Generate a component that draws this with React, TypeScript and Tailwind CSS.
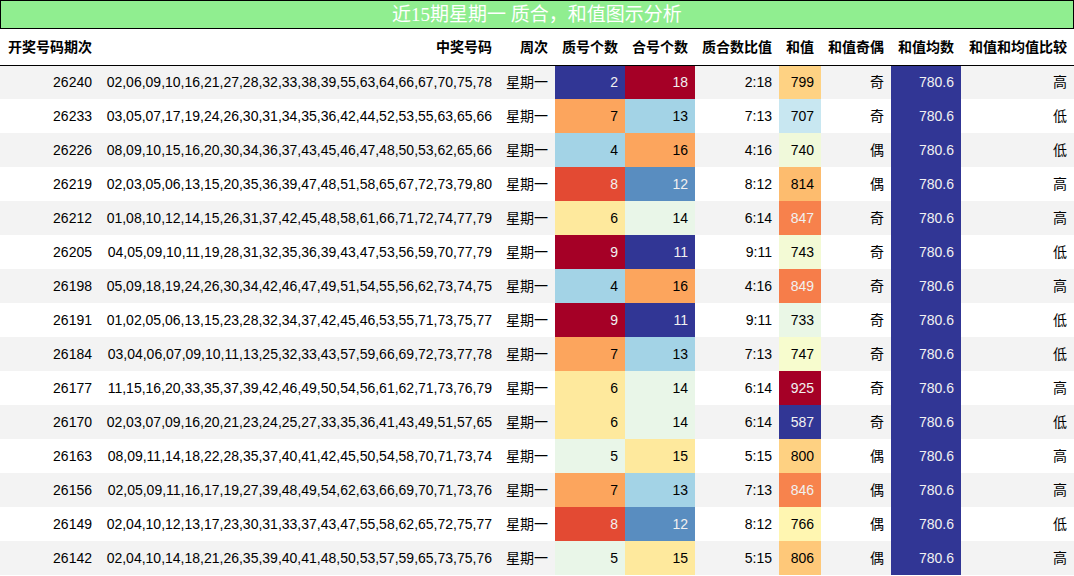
const rows: [string, string, number, number, number, string, string][] = [
  ["26240", "02,06,09,10,16,21,27,28,32,33,38,39,55,63,64,66,67,70,75,78", 2, 18, 799, "奇", "高"],
  ["26233", "03,05,07,17,19,24,26,30,31,34,35,36,42,44,52,53,55,63,65,66", 7, 13, 707, "奇", "低"],
  ["26226", "08,09,10,15,16,20,30,34,36,37,43,45,46,47,48,50,53,62,65,66", 4, 16, 740, "偶", "低"],
  ["26219", "02,03,05,06,13,15,20,35,36,39,47,48,51,58,65,67,72,73,79,80", 8, 12, 814, "偶", "高"],
  ["26212", "01,08,10,12,14,15,26,31,37,42,45,48,58,61,66,71,72,74,77,79", 6, 14, 847, "奇", "高"],
  ["26205", "04,05,09,10,11,19,28,31,32,35,36,39,43,47,53,56,59,70,77,79", 9, 11, 743, "奇", "低"],
  ["26198", "05,09,18,19,24,26,30,34,42,46,47,49,51,54,55,56,62,73,74,75", 4, 16, 849, "奇", "高"],
  ["26191", "01,02,05,06,13,15,23,28,32,34,37,42,45,46,53,55,71,73,75,77", 9, 11, 733, "奇", "低"],
  ["26184", "03,04,06,07,09,10,11,13,25,32,33,43,57,59,66,69,72,73,77,78", 7, 13, 747, "奇", "低"],
  ["26177", "11,15,16,20,33,35,37,39,42,46,49,50,54,56,61,62,71,73,76,79", 6, 14, 925, "奇", "高"],
  ["26170", "02,03,07,09,16,20,21,23,24,25,27,33,35,36,41,43,49,51,57,65", 6, 14, 587, "奇", "低"],
  ["26163", "08,09,11,14,18,22,28,35,37,40,41,42,45,50,54,58,70,71,73,74", 5, 15, 800, "偶", "高"],
  ["26156", "02,05,09,11,16,17,19,27,39,48,49,54,62,63,66,69,70,71,73,76", 7, 13, 846, "偶", "高"],
  ["26149", "02,04,10,12,13,17,23,30,31,33,37,43,47,55,58,62,65,72,75,77", 8, 12, 766, "偶", "低"],
  ["26142", "02,04,10,14,18,21,26,35,39,40,41,48,50,53,57,59,65,73,75,76", 5, 15, 806, "偶", "高"],
];

// RdYlBu_r stops
const stops = [
  "#313695", "#4575b4", "#74add1", "#abd9e9", "#e0f3f8", "#ffffbf",
  "#fee090", "#fdae61", "#f46d43", "#d73027", "#a50026",
];

function hex(h: string) {
  return [1, 3, 5].map((i) => parseInt(h.slice(i, i + 2), 16));
}

function gradient(v: number, min: number, max: number) {
  const t = max === min ? 0 : (v - min) / (max - min);
  const p = t * (stops.length - 1);
  const i = Math.min(Math.floor(p), stops.length - 2);
  const f = p - i;
  const a = hex(stops[i]);
  const b = hex(stops[i + 1]);
  const rgb = a.map((c, k) => Math.round(c + (b[k] - c) * f));
  const lin = rgb.map((c) => {
    const s = c / 255;
    return s <= 0.03928 ? s / 12.92 : Math.pow((s + 0.055) / 1.055, 2.4);
  });
  const lum = 0.2126 * lin[0] + 0.7152 * lin[1] + 0.0722 * lin[2];
  return {
    backgroundColor: `rgb(${rgb.join(",")})`,
    color: lum < 0.408 ? "#f1f1f1" : "#000000",
  };
}

const headers = ["开奖号码期次", "中奖号码", "周次", "质号个数", "合号个数", "质合数比值", "和值", "和值奇偶", "和值均数", "和值和均值比较"];
const widths = ["w-[99px]", "w-[400px]", "w-[56px]", "w-[70px]", "w-[70px]", "w-[84px]", "w-[42px]", "w-[70px]", "w-[70px]", "w-[113px]"];

export default function App() {
  const primes = rows.map((r) => r[2]);
  const comps = rows.map((r) => r[3]);
  const sums = rows.map((r) => r[4]);
  const pMin = Math.min(...primes), pMax = Math.max(...primes);
  const cMin = Math.min(...comps), cMax = Math.max(...comps);
  const sMin = Math.min(...sums), sMax = Math.max(...sums);
  const avg = gradient(780.6, 780.6, 780.6);

  return (
    <div className="w-[1074px] bg-white text-black font-['Liberation_Sans','Noto_Sans_CJK_SC',sans-serif] text-[14px]">
      {/* Title */}
      <div className="h-[29px] border border-black bg-[#90ee90] flex items-center justify-center text-white text-[19px] leading-none font-['Liberation_Serif','Noto_Sans_CJK_SC',serif]">
        近15期星期一 质合，和值图示分析
      </div>

      <table className="table-fixed border-collapse w-[1074px]">
        <colgroup>
          {widths.map((w, i) => (
            <col key={i} className={w} />
          ))}
        </colgroup>
        <thead>
          <tr className="h-[36px] border-b border-black">
            {headers.map((h) => (
              <th key={h} className="px-[7px] text-right font-bold whitespace-nowrap font-['Noto_Sans_CJK_SC',sans-serif]">
                {h}
              </th>
            ))}
          </tr>
        </thead>
        <tbody>
          {rows.map((r, i) => (
            <tr key={r[0]} className={`h-[34px] ${i % 2 === 0 ? "bg-[#f3f3f3]" : "bg-white"}`}>
              <td className="px-[7px] text-right">{r[0]}</td>
              <td className="px-[7px] text-right whitespace-nowrap">{r[1]}</td>
              <td className="px-[7px] text-right">星期一</td>
              <td className="px-[7px] text-right" style={gradient(r[2], pMin, pMax)}>{r[2]}</td>
              <td className="px-[7px] text-right" style={gradient(r[3], cMin, cMax)}>{r[3]}</td>
              <td className="px-[7px] text-right">{`${r[2]}:${r[3]}`}</td>
              <td className="px-[7px] text-right" style={gradient(r[4], sMin, sMax)}>{r[4]}</td>
              <td className="px-[7px] text-right">{r[5]}</td>
              <td className="px-[7px] text-right" style={avg}>780.6</td>
              <td className="px-[7px] text-right">{r[6]}</td>
            </tr>
          ))}
        </tbody>
      </table>
    </div>
  );
}
